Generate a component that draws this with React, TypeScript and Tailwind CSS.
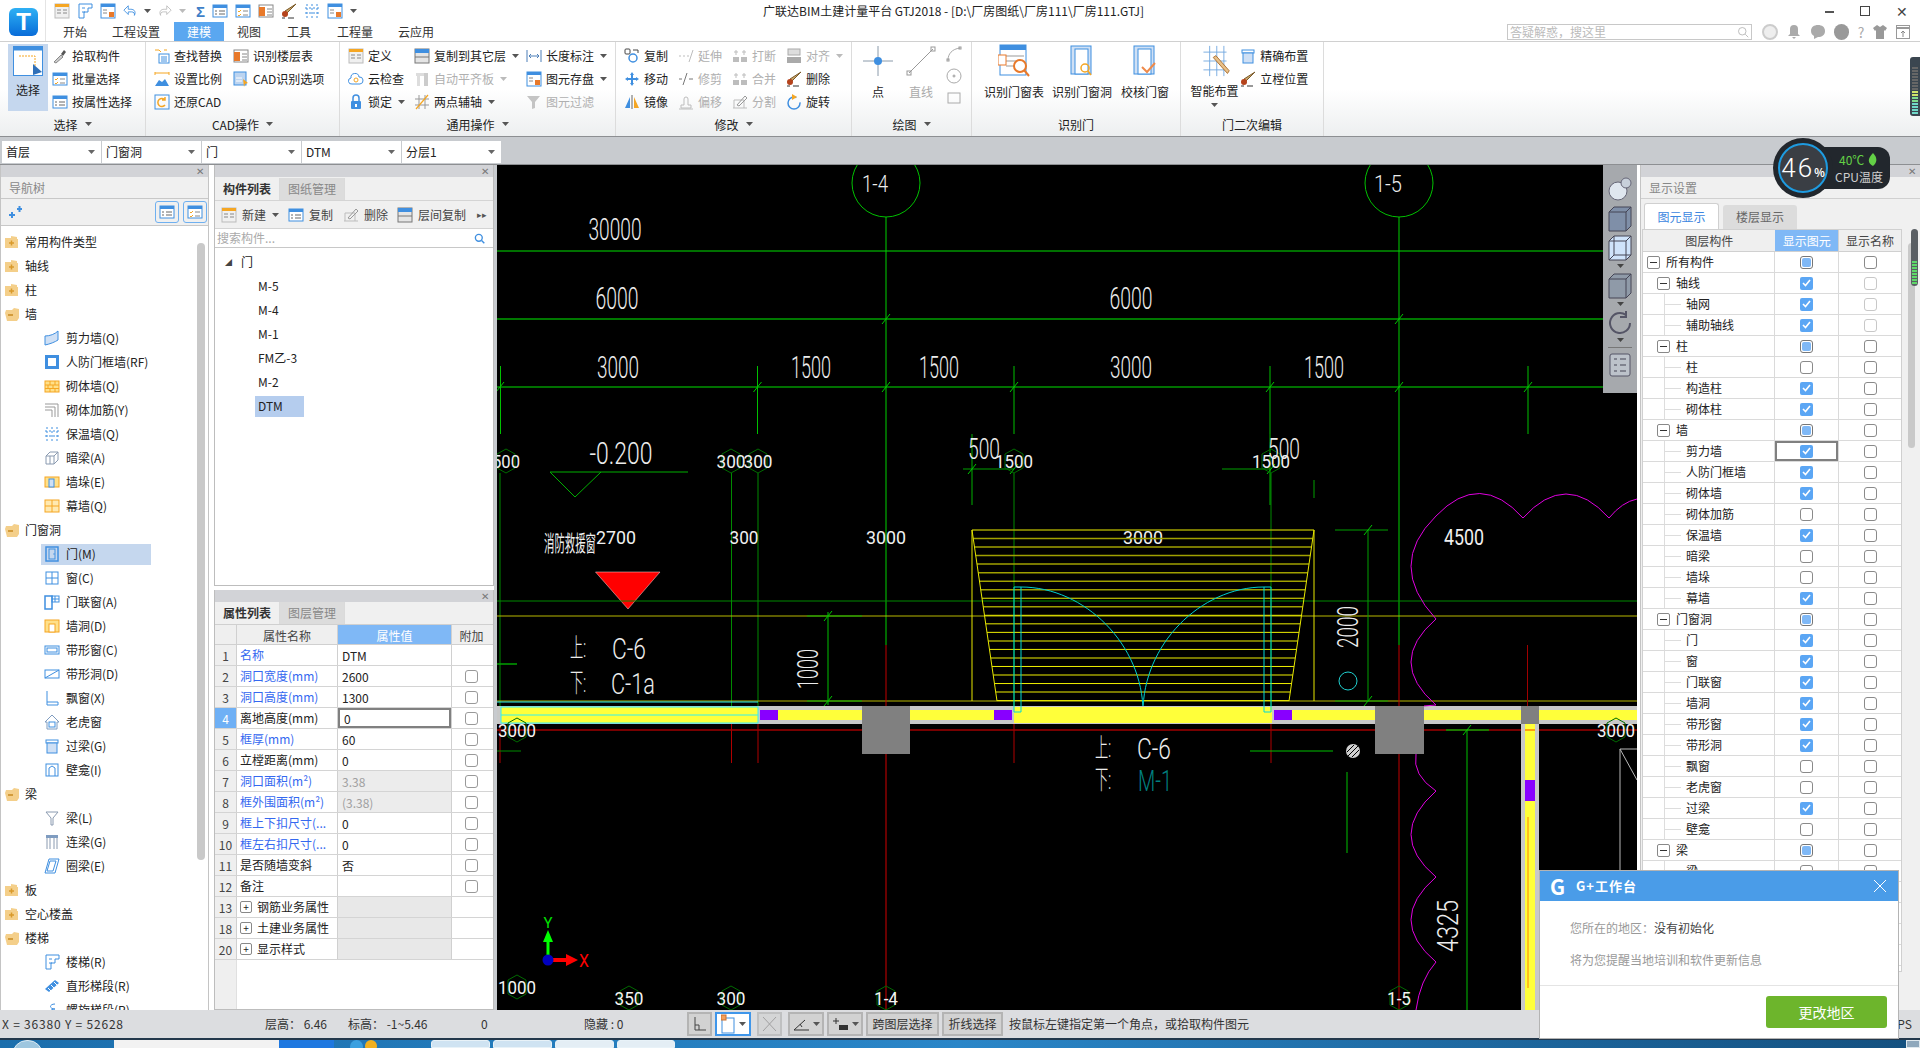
import React from "react";

const B = "#3f8fe0";
const O = "#f5a623";
const G = "#bdbdbd";
const D = "#666";

const Caret = ({ c = "#555" }: { c?: string }) => (
  <svg width="7" height="4" className="shrink-0"><path d="M0 0h7L3.5 4z" fill={c} /></svg>
);

// small 16x16 icon drawings
const ICONS: Record<string, React.ReactNode> = {
  pick: <><path d="M2 14l7-7 2 2-7 6z" fill="#ccc" stroke="#888" /><path d="M9 6l3-4 2 2-3 4z" fill="#555" /></>,
  batch: <><rect x="1" y="2" width="14" height="12" stroke={B} fill="#fff" /><rect x="1" y="2" width="14" height="3" fill={B} /><path d="M3 8l1 1 2-2M3 12l1 1 2-2" stroke={O} /><path d="M8 8h5M8 12h5" stroke="#888" /></>,
  prop: <><rect x="1" y="2" width="14" height="12" stroke={B} fill="#fff" /><rect x="1" y="2" width="14" height="3" fill={B} /><path d="M3 8h2M3 11h2M7 8h6M7 11h6" stroke={D} /></>,
  find: <><rect x="5" y="6" width="10" height="9" stroke={B} fill="#fff" /><path d="M7 9h6M7 11h6M7 13h6" stroke={B} /><path d="M1 2h4l2 2M10 2h3" stroke={O} /></>,
  scale: <><path d="M1 15l4-6 3 2 3-3 4 7z" fill={B} /><path d="M1 2h14M1 1v3M15 1v3" stroke={O} /></>,
  restore: <><rect x="1" y="1" width="14" height="14" stroke={B} /><path d="M11 6a4 4 0 1 0 0 5M11 3v3H8" stroke={O} strokeWidth="1.5" /></>,
  floor: <><rect x="1" y="2" width="14" height="12" stroke="#888" fill="#fff" /><rect x="1" y="4" width="6" height="9" fill="#e8792a" /><path d="M9 6h5M9 9h5M9 12h5" stroke="#888" /></>,
  cadopt: <><rect x="1" y="1" width="12" height="13" fill="#bcd4f0" stroke={B} /><path d="M10 8l5 4-3 1-1 3z" fill={O} /><path d="M3 7h6M3 10h6" stroke="#fff" /></>,
  define: <><rect x="1" y="1" width="14" height="14" fill="#f0f0f0" stroke="#bbb" /><rect x="1" y="1" width="14" height="3" fill={O} /><path d="M3 7h4M3 10h4M9 7h4M9 10h4" stroke="#888" /></>,
  cloud: <><path d="M4 13a3 3 0 0 1-1-6 4 4 0 0 1 8-1 3.500 3.500 0 0 1 1 7z" fill="#fff" stroke={B} /><circle cx="8" cy="9" r="2" stroke={O} /></>,
  lock: <><rect x="3" y="7" width="10" height="8" rx="1" fill={B} /><path d="M5 7V4a3 3 0 0 1 6 0v3" stroke={B} strokeWidth="1.500" /><rect x="7" y="10" width="2" height="3" fill="#fff" /></>,
  copyfl: <><rect x="1" y="1" width="14" height="14" fill="#e5e5e5" stroke="#777" /><rect x="1" y="1" width="14" height="4" fill={B} /><path d="M1 9h14" stroke="#777" /></>,
  autoalign: <><rect x="2" y="2" width="12" height="3" fill="#ddd" /><rect x="3" y="2" width="3" height="13" fill="#ddd" /><rect x="10" y="2" width="4" height="13" fill="#ccc" /></>,
  twoaxis: <><path d="M1 5h14M1 11h14M5 1v14M11 1v14" stroke="#999" /><path d="M2 15L14 1" stroke={O} strokeWidth="1.200" /></>,
  length: <><path d="M1 2v12M15 2v12M3 8h10M3 8l2-2M3 8l2 2M13 8l-2-2M13 8l-2 2" stroke="#4d7fb8" /></>,
  savefile: <><rect x="1" y="1" width="14" height="14" fill="#fff" stroke={B} /><rect x="1" y="1" width="14" height="3" fill={B} /><path d="M3 7h4M3 10h4" stroke="#888" /><rect x="9" y="9" width="5" height="5" fill="#e8792a" /></>,
  filter: <path d="M1 2h13L9 8v6l-3 1V8z" fill="#c4c4c4" />,
  copy: <><rect x="1" y="1" width="5" height="5" rx="1" stroke="#444" /><circle cx="9" cy="10" r="4" stroke={B} strokeWidth="1.500" /><path d="M9 2h5v3" stroke="#444" /></>,
  move: <path d="M8 1l2 3H9v3h3V6l3 2-3 2V9H9v3h1l-2 3-2-3h1V9H4v1L1 8l3-2v1h3V4H6z" fill={B} />,
  mirror: <><path d="M1 14l5-11v11z" fill={B} /><path d="M15 14L10 3v11z" fill={O} /><path d="M8 1v14" stroke={D} /></>,
  extend: <path d="M1 8h2M5 8h2M9 8h2M11 14l4-12" stroke={G} />,
  trim: <path d="M1 8h3M11 8h4M5 14L9 2" stroke="#777" />,
  offset: <path d="M3 14v-3h3V5a2 2 0 0 1 4 0v6h3v3zM1 15h14" stroke={G} />,
  brk: <><rect x="1" y="9" width="6" height="5" fill={G} /><rect x="9" y="9" width="6" height="5" fill={G} /><path d="M4 2v5M2 4h4M12 2v5M10 4h4" stroke={G} /></>,
  split: <><path d="M1 14h14M2 6h10M2 6v8M12 6v8" stroke={G} /><path d="M5 11l8-9 2 2-8 8z" stroke="#999" /></>,
  align: <><rect x="2" y="1" width="12" height="6" fill="#ddd" stroke="#aaa" /><rect x="1" y="9" width="14" height="6" fill="#aaa" /></>,
  del: <><path d="M15 1L6 10l-2-2z" fill="#c9a56a" stroke="#7a5a2a" /><circle cx="4" cy="11" r="3" fill="#b5431c" /><path d="M1 15h3M7 15h6" stroke="#333" /></>,
  rotate: <><circle cx="8" cy="9" r="6" stroke={B} strokeWidth="1.500" strokeDasharray="30 6" /><path d="M6 0l5 3-5 3z" fill={O} /></>,
  folderPlus: <><path d="M1 4h6V2l6 1v2h1v9H1z" fill="#f4cf8a" /><path d="M5 9h5M7.500 6.500v5" stroke="#d99a2b" strokeWidth="1.500" /></>,
  folderMinus: <><path d="M2 4h6l2-2 5 1v9l-2 3H3l-2-8z" fill="#f4cf8a" /><path d="M4 9h5" stroke="#c98a1f" strokeWidth="1.500" /></>,
  shear: <><path d="M1 6c5 0 10-2 13-5v9c-3 2-8 4-13 5z" fill="#cfe0f5" stroke={B} /></>,
  rf: <><rect x="1" y="1" width="14" height="14" fill={B} /><rect x="4" y="4" width="8" height="8" fill="#fff" /></>,
  masonry: <><rect x="1" y="3" width="14" height="11" fill="#ffe08a" stroke={O} /><path d="M1 7h14M1 10.500h14M6 3v4M11 3v4M4 7v3.500M9 7v3.500M6 10.500V14M11 10.500V14" stroke={O} /></>,
  rebar: <path d="M1 2h13v13M1 5h10v10M1 8h7v7" stroke="#999" />,
  insul: <path d="M3 1v14M8 1v14M13 1v14M1 5h14M1 10h14" stroke={B} strokeDasharray="2 2" />,
  hidden: <><path d="M2 6l4-4h8v8l-4 4H2z" stroke="#8a9ab0" fill="#fff" /><path d="M2 6h8v8M10 6l4-4M6 6v8" stroke="#8a9ab0" /></>,
  pier: <><rect x="1" y="3" width="14" height="10" fill="#ffe08a" stroke={O} /><rect x="5" y="5" width="5" height="8" fill="#cfe0f5" stroke={B} /></>,
  curtain: <><rect x="1" y="2" width="14" height="12" fill="#ffe9b0" stroke={O} /><path d="M8 2v12M1 8h14" stroke={O} /></>,
  door: <><rect x="2" y="1" width="12" height="14" stroke={B} strokeWidth="1.500" /><rect x="5" y="3" width="6" height="10" stroke={B} /><circle cx="10" cy="8" r=".7" fill={B} /></>,
  win: <><rect x="2" y="2" width="12" height="12" stroke={B} /><path d="M8 2v12M2 8h12" stroke={B} /></>,
  doorwin: <><rect x="1" y="2" width="7" height="13" stroke={B} strokeWidth="1.500" /><rect x="8" y="2" width="7" height="6" stroke={B} /><path d="M11 2v6M8 5h7" stroke={B} /></>,
  hole: <><rect x="1" y="2" width="14" height="12" fill="#ffe08a" stroke={O} /><rect x="5" y="6" width="6" height="8" fill="#fff" stroke={O} /></>,
  stripw: <><rect x="1" y="4" width="14" height="8" stroke={B} /><rect x="3" y="6" width="10" height="4" stroke={B} /></>,
  striph: <><rect x="1" y="4" width="14" height="8" stroke={B} /><path d="M1 12L15 4" stroke={B} /></>,
  bay: <path d="M3 1v11h11M3 15h11v-3M3 12v3" stroke={B} />,
  dormer: <><path d="M8 1L1 8h2v7h10V8h2z" stroke="#7f9cc0" fill="#fff" /><rect x="5" y="8" width="6" height="5" stroke={B} /></>,
  lintel: <><rect x="2" y="2" width="12" height="3" stroke={B} /><rect x="3" y="5" width="10" height="10" fill="#cfe0f5" stroke={B} /></>,
  niche: <><rect x="2" y="2" width="12" height="12" stroke={B} /><path d="M5 14V6l3-2 3 2v8" stroke={B} /></>,
  beam: <path d="M2 2h12L9 8v7H7V8z" stroke="#8a9ab0" />,
  linkb: <><rect x="2" y="1" width="12" height="3" fill="#7f9cc0" /><path d="M3 4v11M13 4v11M6 4v11M10 4v11" stroke="#8a9ab0" /></>,
  ring: <path d="M5 1h10l-4 14H1z M6 3l-3 10h6l3-10z" stroke={B} />,
  stair: <path d="M2 1h13v4h-4v4H7v6H2z M5 5h3M5 9h3" stroke={B} fill="#fff" />,
  flight: <><path d="M1 11L11 2l4 3-10 9z" fill={B} /><path d="M4 10l3 3M7 7l3 3M10 4l3 3" stroke="#fff" /></>,
  spiral: <path d="M11 2c-6 0-6 5 0 5M11 7c-6 0-6 5 0 5" stroke={B} />,
};

const Ico = ({ n, s = 16 }: { n: string; s?: number }) => (
  <svg width={s} height={s} viewBox="0 0 16 16" fill="none" className="shrink-0">{ICONS[n]}</svg>
);

const Item = ({ n, t, gray, arrow }: { n: string; t: string; gray?: boolean; arrow?: boolean }) => (
  <div className={`flex items-center h-[23px] whitespace-nowrap ${gray ? "text-[#b0b0b0]" : "text-[#222]"}`}>
    <span className="w-[20px] shrink-0"><Ico n={n} /></span>
    <span>{t}</span>
    {arrow && <span className="ml-[6px]"><Caret c={gray ? "#bbb" : "#555"} /></span>}
  </div>
);

const Col = ({ w, children }: { w: string; children: React.ReactNode }) => (
  <div className={`flex flex-col ${w}`}>{children}</div>
);

const Group = ({ w, label, arrow, pl, children }: { w: string; label: string; arrow?: boolean; pl: string; children: React.ReactNode }) => (
  <div className={`flex flex-col h-full border-r border-[#dcdcdc] shrink-0 overflow-hidden ${w}`}>
    <div className={`flex h-[70px] shrink-0 pt-[2px] ${pl}`}>{children}</div>
    <div className="h-[24px] flex items-center justify-center gap-[7px] text-[#222]">
      {label}{arrow && <Caret />}
    </div>
  </div>
);

const BigBtn = ({ t, w, gray, children }: { t: string; w: string; gray?: boolean; children: React.ReactNode }) => (
  <div className={`flex flex-col items-center ${w} ${gray ? "text-[#aaa]" : "text-[#222]"}`}>
    <div className="h-[34px] flex items-center">{children}</div>
    <div className="mt-[2px] whitespace-nowrap">{t}</div>
  </div>
);

const TopBar = () => (
  <div className="flex h-[41px] bg-white shrink-0">
    <div className="w-[46px] shrink-0 flex items-start pt-[8px] pl-[9px] border-r border-[#e4e4e4]">
      <div className="w-[29px] h-[28px] rounded-[6px] bg-gradient-to-b from-[#2fb0f4] to-[#0a6cd8] text-white text-[24px] font-bold leading-[28px] text-center font-['Liberation_Sans',sans-serif]">T</div>
    </div>
    <div className="flex-1 flex flex-col">
      <div className="h-[22px] flex items-center">
        <div className="w-[717px] flex items-center">
          <div className="flex items-center gap-[7px] pl-[8px]">
            {["define", "stair", "savefile"].map((n) => <Ico key={n} n={n} />)}
            <svg width="14" height="14" viewBox="0 0 16 16" fill="none"><path d="M6 2L1 7l5 5V9h4a3 3 0 0 1 3 4c2-4 0-7-4-7H6z" stroke={B} /></svg>
            <Caret />
            <svg width="14" height="14" viewBox="0 0 16 16" fill="none"><path d="M10 2l5 5-5 5V9H6a3 3 0 0 0-3 4C1 9 3 6 7 6h3z" stroke={G} /></svg>
            <Caret c="#bbb" />
            <span className="ml-[3px] text-[#3f7fc8] text-[15px] leading-none font-bold font-['Liberation_Sans',sans-serif]">Σ</span>
            <Ico n="prop" />
            <Ico n="batch" />
            <Ico n="floor" />
            <Ico n="del" />
            <Ico n="insul" />
            <Ico n="savefile" />
            <Caret />
          </div>
        </div>
        <div className="w-[393px] text-[12px] text-[#222] whitespace-nowrap">广联达BIM土建计量平台 GTJ2018 - [D:\厂房图纸\厂房111\厂房111.GTJ]</div>
        <div className="flex-1 flex items-center justify-end gap-[26px] pr-[12px]">
          <span className="w-[9px] h-[2px] bg-[#555] mt-[2px]" />
          <span className="w-[10px] h-[10px] border border-[#444] bg-white" />
          <span className="text-[#444] text-[14px] leading-none">✕</span>
        </div>
      </div>
      <div className="flex items-stretch h-[19px] text-[12px] text-[#333] leading-[19px] pl-[6px]">
        <div className="w-[46px] text-center">开始</div>
        <div className="w-[76px] text-center">工程设置</div>
        <div className="w-[50px] text-center bg-[#5aa7f0] text-white">建模</div>
        <div className="w-[50px] text-center">视图</div>
        <div className="w-[50px] text-center">工具</div>
        <div className="w-[62px] text-center">工程量</div>
        <div className="w-[60px] text-center">云应用</div>
        <div className="ml-auto flex items-center">
          <div className="w-[245px] h-[16px] border border-[#c8c8c8] flex items-center justify-between px-[2px] text-[#bbb] leading-none">
            <span>答疑解惑，搜这里</span>
            <svg width="12" height="12" viewBox="0 0 16 16" fill="none"><circle cx="7" cy="7" r="5" stroke="#aaa" /><path d="M11 11l4 4" stroke="#aaa" /></svg>
          </div>
          <div className="w-[168px] flex items-center justify-around px-[6px]">
            <span className="w-[16px] h-[16px] rounded-full border-2 border-[#ccc] bg-[#eee]" />
            <svg width="14" height="16" viewBox="0 0 14 16"><path d="M7 1a4 4 0 0 0-4 4v5l-2 2h12l-2-2V5a4 4 0 0 0-4-4zM5 13h4l-2 2z" fill="#aaa" /></svg>
            <svg width="16" height="14" viewBox="0 0 16 14"><path d="M8 0c4 0 7 2 7 6s-3 6-7 6l-4 2v-3C2 10 1 8 1 6c0-4 3-6 7-6z" fill="#aaa" /></svg>
            <span className="w-[15px] h-[16px] rounded-full bg-[#999]" />
            <span className="text-[#aaa] text-[14px] leading-none">?</span>
            <svg width="14" height="14" viewBox="0 0 14 14"><path d="M4 0L0 3l2 3 1-1v9h8V5l1 1 2-3-4-3-3 2z" fill="#999" /></svg>
            <svg width="14" height="14" viewBox="0 0 14 14" fill="none"><rect x=".5" y=".5" width="13" height="13" stroke="#999" /><path d="M1 3h12" stroke="#999" strokeWidth="2" /><path d="M7 12V6M5 8l2-2 2 2" stroke="#888" /></svg>
          </div>
        </div>
      </div>
    </div>
  </div>
);

const Ribbon = () => (
  <div className="relative flex h-[96px] shrink-0 border-t border-b border-[#d0d0d0] border-b-[#8d8f92] bg-gradient-to-b from-white via-white to-[#edeff0] text-[12px] leading-[23px]">
    <Group w="w-[146px]" label="选择" arrow pl="pl-[8px]">
      <div className="w-[40px] h-[67px] bg-[#c5d7ee] flex flex-col items-center pt-[2px] mr-[4px] text-[#222]">
        <svg width="30" height="30" viewBox="0 0 30 30" fill="none"><rect x=".5" y=".5" width="29" height="29" fill="#fff" stroke={B} /><rect x=".5" y=".5" width="29" height="4" fill={B} /><path d="M6 10h16v14" stroke={O} strokeDasharray="2 1" /><path d="M20 18l9 8-9 3z" fill="#2f6fb8" /></svg>
        <span className="mt-[2px]">选择</span>
      </div>
      <Col w="w-[92px]">
        <Item n="pick" t="拾取构件" />
        <Item n="batch" t="批量选择" />
        <Item n="prop" t="按属性选择" />
      </Col>
    </Group>
    <Group w="w-[194px]" label="CAD操作" arrow pl="pl-[8px]">
      <Col w="w-[79px]">
        <Item n="find" t="查找替换" />
        <Item n="scale" t="设置比例" />
        <Item n="restore" t="还原CAD" />
      </Col>
      <Col w="w-[100px]">
        <Item n="floor" t="识别楼层表" />
        <Item n="cadopt" t="CAD识别选项" />
      </Col>
    </Group>
    <Group w="w-[276px]" label="通用操作" arrow pl="pl-[8px]">
      <Col w="w-[66px]">
        <Item n="define" t="定义" />
        <Item n="cloud" t="云检查" />
        <Item n="lock" t="锁定" arrow />
      </Col>
      <Col w="w-[112px]">
        <Item n="copyfl" t="复制到其它层" arrow />
        <Item n="autoalign" t="自动平齐板" gray arrow />
        <Item n="twoaxis" t="两点辅轴" arrow />
      </Col>
      <Col w="w-[86px]">
        <Item n="length" t="长度标注" arrow />
        <Item n="savefile" t="图元存盘" arrow />
        <Item n="filter" t="图元过滤" gray />
      </Col>
    </Group>
    <Group w="w-[236px]" label="修改" arrow pl="pl-[8px]">
      <Col w="w-[54px]">
        <Item n="copy" t="复制" />
        <Item n="move" t="移动" />
        <Item n="mirror" t="镜像" />
      </Col>
      <Col w="w-[54px]">
        <Item n="extend" t="延伸" gray />
        <Item n="trim" t="修剪" gray />
        <Item n="offset" t="偏移" gray />
      </Col>
      <Col w="w-[54px]">
        <Item n="brk" t="打断" gray />
        <Item n="brk" t="合并" gray />
        <Item n="split" t="分割" gray />
      </Col>
      <Col w="w-[60px]">
        <Item n="align" t="对齐" gray arrow />
        <Item n="del" t="删除" />
        <Item n="rotate" t="旋转" />
      </Col>
    </Group>
    <Group w="w-[120px]" label="绘图" arrow pl="pl-[8px]">
      <BigBtn t="点" w="w-[36px]">
        <svg width="30" height="30" viewBox="0 0 30 30" fill="none"><path d="M15 0v30M0 15h30" stroke="#8a9aaa" /><circle cx="15" cy="15" r="4" fill={B} /></svg>
      </BigBtn>
      <BigBtn t="直线" w="w-[50px]" gray>
        <svg width="30" height="30" viewBox="0 0 30 30" fill="none"><path d="M3 27L27 3" stroke="#999" /><rect x="1" y="25" width="4" height="4" stroke="#999" /><rect x="25" y="1" width="4" height="4" stroke="#999" /></svg>
      </BigBtn>
      <div className="flex flex-col items-center gap-[6px] w-[16px] pt-[2px]">
        <svg width="16" height="16" viewBox="0 0 16 16" fill="none"><path d="M2 14C2 8 6 3 14 2" stroke="#aaa" /><rect x="1" y="13" width="2" height="2" stroke="#999" /><rect x="13" y="1" width="2" height="2" stroke="#999" /></svg>
        <svg width="16" height="16" viewBox="0 0 16 16" fill="none"><circle cx="8" cy="8" r="7" stroke="#aaa" /><circle cx="8" cy="8" r="1" stroke="#999" /></svg>
        <svg width="16" height="16" viewBox="0 0 16 16" fill="none"><rect x="2" y="3" width="12" height="10" stroke="#aaa" /></svg>
      </div>
    </Group>
    <Group w="w-[209px]" label="识别门" pl="pl-[8px]">
      <BigBtn t="识别门窗表" w="w-[68px]">
        <svg width="32" height="34" viewBox="0 0 32 34" fill="none"><rect x="2" y="1" width="26" height="30" fill="#fff" stroke={B} /><rect x="2" y="1" width="26" height="5" fill={B} /><path d="M8 12h18M8 17h10M8 22h8" stroke="#999" /><rect x="0" y="11" width="8" height="10" fill="#fff" stroke="#e8792a" /><circle cx="22" cy="22" r="6" fill="#fff" stroke="#e8792a" strokeWidth="2" /><path d="M26 26l5 6" stroke="#e8792a" strokeWidth="2" /></svg>
      </BigBtn>
      <BigBtn t="识别门窗洞" w="w-[68px]">
        <svg width="24" height="32" viewBox="0 0 24 32" fill="none"><rect x="1" y="1" width="20" height="28" fill="#cfe0f5" stroke={B} /><rect x="5" y="4" width="13" height="25" fill="#fff" stroke={B} /><circle cx="15" cy="23" r="4" stroke={O} strokeWidth="1.500" /><path d="M18 26l3 4" stroke={O} strokeWidth="1.500" /></svg>
      </BigBtn>
      <BigBtn t="校核门窗" w="w-[58px]">
        <svg width="24" height="32" viewBox="0 0 24 32" fill="none"><rect x="1" y="1" width="20" height="28" fill="#cfe0f5" stroke={B} /><rect x="5" y="4" width="13" height="25" fill="#fff" stroke={B} /><path d="M9 22l5 5 8-9" stroke="#ef8a4a" strokeWidth="2" /></svg>
      </BigBtn>
    </Group>
    <Group w="w-[143px]" label="门二次编辑" pl="pl-[8px]">
      <div className="flex flex-col items-center w-[52px] text-[#222]">
        <svg width="30" height="32" viewBox="0 0 32 36" fill="none" className="mt-[1px]"><path d="M3 8h26M3 18h26M3 28h26M10 1v34M18 1v34M26 1v34" stroke="#6fa6de" /><path d="M30 32L14 14l3-2 15 17z" fill="#e8c088" stroke="#a86a2a" /></svg>
        <span className="mt-[2px]">智能布置</span>
        <span className="mt-[1px] leading-none"><Caret /></span>
      </div>
      <Col w="w-[84px]">
        <Item n="lintel" t="精确布置" />
        <Item n="del" t="立樘位置" />
      </Col>
    </Group>
    <div className="flex-1" />
    <div className="absolute right-0 top-[15px] w-[10px] h-[59px] rounded-l-[3px] bg-[#3b4650] flex flex-col justify-end gap-[1px] p-[2px]">
      {["#666", "#666", "#666", "#666", "#666", "#666", "#666", "#666", "#cfe26a", "#cfe26a", "#7fdc8f", "#7fdc8f", "#6fd8c8", "#6fd8c8", "#6fd8c8", "#6fd8c8"].map((c, i) => (
        <span key={i} className="h-[2px] w-full" style={{ background: c }} />
      ))}
    </div>
  </div>
);

const Selector = () => (
  <div className="flex gap-[1px] pl-[2px] pt-[4px] h-[28px] bg-[#c8cbcf] shrink-0 text-[12px] border-b border-[#8d8f92]">
    {["首层", "门窗洞", "门", "DTM", "分层1"].map((t) => (
      <div key={t} className="w-[99px] h-[22px] bg-white flex items-center justify-between pl-[4px] pr-[6px] text-[#222]">
        <span>{t}</span><Caret c="#666" />
      </div>
    ))}
  </div>
);

const CloseBar = () => (
  <div className="h-[12px] bg-[#d2d3d7] flex items-center justify-end pr-[4px] text-[#777] text-[10px] leading-none shrink-0">✕</div>
);

const NAV: [string, string][] = [
  ["常用构件类型", "+"], ["轴线", "+"], ["柱", "+"], ["墙", "-"],
  ["剪力墙(Q)", "shear"], ["人防门框墙(RF)", "rf"], ["砌体墙(Q)", "masonry"], ["砌体加筋(Y)", "rebar"],
  ["保温墙(Q)", "insul"], ["暗梁(A)", "hidden"], ["墙垛(E)", "pier"], ["幕墙(Q)", "curtain"],
  ["门窗洞", "-"], ["门(M)", "door"], ["窗(C)", "win"], ["门联窗(A)", "doorwin"], ["墙洞(D)", "hole"],
  ["带形窗(C)", "stripw"], ["带形洞(D)", "striph"], ["飘窗(X)", "bay"], ["老虎窗", "dormer"],
  ["过梁(G)", "lintel"], ["壁龛(I)", "niche"], ["梁", "-"], ["梁(L)", "beam"], ["连梁(G)", "linkb"],
  ["圈梁(E)", "ring"], ["板", "+"], ["空心楼盖", "+"], ["楼梯", "-"], ["楼梯(R)", "stair"],
  ["直形梯段(R)", "flight"], ["螺旋梯段(R)", "spiral"],
];

const NavPanel = () => (
  <div className="w-[209px] shrink-0 flex flex-col border-x border-[#c4c4c4] bg-white text-[12px] text-[#222]">
    <CloseBar />
    <div className="h-[22px] bg-[#f0f0f0] flex items-center pl-[8px] text-[#888] border-b border-[#c8c8c8] shrink-0">导航树</div>
    <div className="h-[27px] bg-[#f0f0f0] flex items-center justify-between pl-[7px] pr-[1px] border-b border-[#c8c8c8] shrink-0">
      <svg width="14" height="12" viewBox="0 0 14 12"><path d="M1 9h6M4 6v6M9 3h5M11.500 0v6" stroke={B} strokeWidth="2" /></svg>
      <div className="flex gap-[4px]">
        <span className="w-[24px] h-[22px] rounded-[3px] border border-[#6fb0f0] flex items-center justify-center"><Ico n="prop" /></span>
        <span className="w-[24px] h-[22px] rounded-[3px] border border-[#6fb0f0] flex items-center justify-center"><Ico n="batch" /></span>
      </div>
    </div>
    <div className="flex flex-1 overflow-hidden">
      <div className="flex-1 overflow-hidden pt-[4px]">
        {NAV.map(([t, k]) =>
          k === "+" || k === "-" ? (
            <div key={t} className="h-[24px] flex items-center pl-[3px] gap-[5px] whitespace-nowrap">
              <Ico n={k === "+" ? "folderPlus" : "folderMinus"} /><span>{t}</span>
            </div>
          ) : (
            <div key={t} className="h-[24px] flex items-center pl-[40px] whitespace-nowrap">
              <div className={`w-[110px] h-[21px] flex items-center pl-[3px] gap-[6px] ${t === "门(M)" ? "bg-[#c5d7ee]" : ""}`}>
                <Ico n={k} /><span>{t}</span>
              </div>
            </div>
          ),
        )}
      </div>
      <div className="w-[8px] mt-[17px] mb-[150px] mr-[3px] rounded-full bg-[#c9c9c9] shrink-0" />
    </div>
  </div>
);

const Tab = ({ t, on }: { t: string; on?: boolean }) => (
  <div className={`w-[65px] h-[22px] flex items-center justify-center border-r border-[#dadada] ${on ? "bg-[#f0f0f0] text-[#333] font-bold" : "bg-[#dcdcdc] text-[#888]"}`}>{t}</div>
);

const ComponentPanel = () => (
  <div className="h-[421px] flex flex-col border border-[#bdbdbd] border-t-0 bg-white text-[12px] shrink-0">
    <CloseBar />
    <div className="flex bg-[#f0f0f0] shrink-0 h-[23px] pt-[1px]"><Tab t="构件列表" on /><Tab t="图纸管理" /></div>
    <div className="h-[29px] flex items-center bg-[#f0f0f0] border-y border-[#d4d4d4] pl-[6px] text-[#444] shrink-0">
      <span className="mr-[5px]"><Ico n="define" /></span>新建<span className="ml-[6px] mr-[9px]"><Caret /></span>
      <span className="mr-[5px]"><Ico n="prop" /></span>复制
      <span className="ml-[10px] mr-[5px]"><Ico n="split" /></span>删除
      <span className="ml-[9px] mr-[5px]"><Ico n="copyfl" /></span>层间复制
      <span className="ml-auto mr-[6px] text-[9px] text-[#555]">▸▸</span>
    </div>
    <div className="h-[19px] flex items-center justify-between px-[2px] pr-[8px] text-[#aaa] border-b border-[#c8c8c8] shrink-0">
      <span>搜索构件...</span>
      <svg width="11" height="11" viewBox="0 0 16 16" fill="none"><circle cx="7" cy="7" r="5" stroke={B} strokeWidth="2" /><path d="M11 11l4 4" stroke={B} strokeWidth="2" /></svg>
    </div>
    <div className="pt-[2px] text-[#222]">
      <div className="h-[24px] flex items-center pl-[10px] gap-[9px]"><span className="text-[7px] text-[#444]">◢</span>门</div>
      {["M-5", "M-4", "M-1", "FM乙-3", "M-2", "DTM"].map((t) => (
        <div key={t} className="h-[24px] flex items-center pl-[40px]">
          <span className={`w-[49px] h-[21px] flex items-center pl-[3px] ${t === "DTM" ? "bg-[#b5cdee]" : ""}`}>{t}</span>
        </div>
      ))}
    </div>
  </div>
);

const PROPS: { n: string; l: string; v?: string; blue?: boolean; ro?: boolean; cb?: boolean; sel?: boolean; grp?: boolean }[] = [
  { n: "1", l: "名称", v: "DTM", blue: true },
  { n: "2", l: "洞口宽度(mm)", v: "2600", blue: true, cb: true },
  { n: "3", l: "洞口高度(mm)", v: "1300", blue: true, cb: true },
  { n: "4", l: "离地高度(mm)", v: "0", cb: true, sel: true },
  { n: "5", l: "框厚(mm)", v: "60", blue: true, cb: true },
  { n: "6", l: "立樘距离(mm)", v: "0", cb: true },
  { n: "7", l: "洞口面积(m²)", v: "3.38", blue: true, ro: true, cb: true },
  { n: "8", l: "框外围面积(m²)", v: "(3.38)", blue: true, ro: true, cb: true },
  { n: "9", l: "框上下扣尺寸(...", v: "0", blue: true, cb: true },
  { n: "10", l: "框左右扣尺寸(...", v: "0", blue: true, cb: true },
  { n: "11", l: "是否随墙变斜", v: "否", cb: true },
  { n: "12", l: "备注", v: "", cb: true },
  { n: "13", l: "钢筋业务属性", grp: true },
  { n: "18", l: "土建业务属性", grp: true },
  { n: "20", l: "显示样式", grp: true },
];

const Box = ({ cls = "" }: { cls?: string }) => (
  <span className={`w-[13px] h-[13px] rounded-[3px] border border-[#8a8a8a] bg-white block ${cls}`} />
);

const PropsPanel = () => (
  <div className="flex-1 flex flex-col border border-[#bdbdbd] border-t-0 bg-white text-[12px] overflow-hidden">
    <CloseBar />
    <div className="flex bg-[#f0f0f0] shrink-0 h-[22px]"><Tab t="属性列表" on /><Tab t="图层管理" /></div>
    <div className="flex h-[21px] text-center leading-[21px] bg-[#efefef] border-y border-[#d0d0d0] shrink-0">
      <div className="w-[22px] border-r border-[#d0d0d0]" />
      <div className="w-[101px] border-r border-[#d0d0d0] text-[#444]">属性名称</div>
      <div className="w-[113px] bg-[#7fb8f6] text-white">属性值</div>
      <div className="w-[40px] border-l border-[#d0d0d0] text-[#444]">附加</div>
    </div>
    {PROPS.map((p) => (
      <div key={p.n} className="flex h-[21px] leading-[22px] border-b border-[#d4d4d4] shrink-0">
        <div className={`w-[22px] text-center border-r border-[#d0d0d0] ${p.sel ? "bg-[#6fb0f5] text-white" : "bg-[#efefef] text-[#444]"}`}>{p.n}</div>
        <div className={`w-[101px] flex items-center pl-[3px] gap-[5px] border-r border-[#d0d0d0] whitespace-nowrap overflow-hidden ${p.blue ? "text-[#3468f0]" : "text-[#222]"}`}>
          {p.grp && <span className="w-[12px] h-[12px] rounded-[2px] border border-[#888] flex items-center justify-center text-[10px] leading-none shrink-0">+</span>}
          {p.l}
        </div>
        <div className={`w-[113px] pl-[4px] ${p.sel ? "border-2 border-[#808080] leading-[17px]" : ""} ${p.ro ? "bg-[#ececec] text-[#a0a0a0]" : "text-[#222]"} ${p.grp ? "bg-[#e8e8e8]" : ""}`}>{p.v}</div>
        <div className="w-[40px] border-l border-[#d0d0d0] flex items-center justify-center">{p.cb && <Box cls="border-[#999]" />}</div>
      </div>
    ))}
    <div className="flex-1 w-[22px] bg-[#efefef] border-r border-[#e0e0e0]" />
  </div>
);

// digits of the drawing, stretched to the width they have on the plan
const T = ({ x, y, s, w, t, c = "#ececec", rot }: { x: number; y: number; s: number; w: number; t: string; c?: string; rot?: number }) => (
  <text x={x} y={y} fontSize={s} fill={c} textAnchor="middle" dominantBaseline="central" textLength={w} lengthAdjust="spacingAndGlyphs"
    fontWeight={s >= 24 ? 300 : 400}
    fontFamily="Roboto,'Noto Sans CJK SC',sans-serif" transform={rot ? `rotate(${rot} ${x} ${y})` : undefined}>{t}</text>
);

const Hex = ({ x, y }: { x: number; y: number }) => (
  <path d={`M${x} ${y - 12}l9 5v14l-9 5-9-5v-14z`} stroke="#006a00" fill="none" />
);

const Tick = ({ x, y, c = "#00c800" }: { x: number; y: number; c?: string }) => (
  <path d={`M${x - 4} ${y + 5}L${x + 4} ${y - 5}`} stroke={c} />
);

const hatch = Array.from({ length: 21 }, (_, i) => 530 + i * 8.53);
const wallBand = "#c8c8c8";

const CadDrawing = () => (
  <svg width="1140" height="845" viewBox="497 165 1140 845" className="block" shapeRendering="geometricPrecision">
    {/* axis circles */}
    <circle cx="886" cy="183" r="34" stroke="#00c000" fill="none" />
    <circle cx="1399" cy="183" r="34" stroke="#00c000" fill="none" />
    <T x={875} y={184} s={24} w={26} t="1-4" />
    <T x={1388} y={184} s={24} w={28} t="1-5" />
    {/* dimension lines */}
    <path d="M497 251H1637" stroke="#00e000" />
    <path d="M497 319H1637" stroke="#00a000" strokeWidth="1.500" />
    <path d="M497 387H1637" stroke="#00e000" />
    <path d="M886 217V645M1399 217V645" stroke="#00d000" />
    <path d="M500.500 366V434M757.500 366V434M1014 366V434M1270 366V434M1528 366V434" stroke="#00c000" />
    {[500, 757.5, 886, 1014, 1270, 1399, 1528].map((x) => <Tick key={x} x={x} y={387} />)}
    <Tick x={886} y={319} /><Tick x={1399} y={319} />
    <T x={615} y={229} s={32} w={53} t="30000" />
    <T x={617} y={298} s={32} w={43} t="6000" />
    <T x={1131} y={298} s={32} w={43} t="6000" />
    <T x={618} y={367} s={32} w={42} t="3000" />
    <T x={811} y={367} s={32} w={40} t="1500" />
    <T x={939} y={367} s={32} w={40} t="1500" />
    <T x={1131} y={367} s={32} w={42} t="3000" />
    <T x={1324} y={367} s={32} w={40} t="1500" />
    {/* elevation mark */}
    <T x={621} y={453} s={32} w={63} t="-0.200" />
    <path d="M550 472H688M550 472L575 497L601 472" stroke="#00b000" fill="none" />
    {/* thin verticals */}
    <path d="M500 473V707M731.500 473V707M758 473V707M1014 473V707M1271 473V707" stroke="#008a00" />
    <path d="M500 707V763M731.500 707V763M758 707V763M1014 707V763M1271 707V763" stroke="#b00000" />
    <path d="M1314 480V498M963 469H1014M1222 469H1270" stroke="#00a000" />
    <path d="M972 434V505M1270 434V505" stroke="#00b000" />
    <Tick x={972} y={469} /><Tick x={1014} y={469} /><Tick x={1271} y={469} />
    {[{ x: 506, t: "500", w: 28 }, { x: 731, t: "300", w: 29 }, { x: 758, t: "300", w: 29 }, { x: 1014, t: "1500", w: 38 }, { x: 1271, t: "1500", w: 38 }].map((h) => (
      <g key={h.x}><Hex x={h.x} y={461} /><T x={h.x} y={461} s={19} w={h.w} t={h.t} c="#f0f0f0" /></g>
    ))}
    <T x={984} y={448} s={30} w={32} t="500" />
    <T x={1284} y={448} s={30} w={32} t="500" />
    {/* row of room dimensions */}
    <T x={616} y={537} s={19} w={40} t="2700" c="#f0f0f0" />
    <T x={744} y={537} s={19} w={29} t="300" c="#f0f0f0" />
    <T x={886} y={537} s={19} w={40} t="3000" c="#f0f0f0" />
    <T x={1143} y={537} s={19} w={40} t="3000" c="#f0f0f0" />
    <T x={570} y={543} s={22} w={52} t="消防救援窗" c="#f0f0f0" />
    <path d="M595.500 572H660L628 609z" fill="#ff0000" stroke="#ffdddd" strokeWidth=".5" />
    <path d="M497 601H1637" stroke="#008a00" />
    <path d="M497 616H1637M497 701H1637" stroke="#b8b800" />
    <path d="M807 616H862M807 701H862" stroke="#00b000" />
    <path d="M828 612V705" stroke="#00c000" />
    <Tick x={828} y={616} /><Tick x={828} y={701} />
    <T x={807} y={669} s={30} w={40} t="1000" rot={-90} />
    <T x={578} y={648} s={26} w={16} t="上:" />
    <T x={629} y={648} s={30} w={34} t="C-6" />
    <T x={578} y={683} s={26} w={16} t="下:" />
    <T x={633} y={683} s={30} w={44} t="C-1a" />
    <path d="M497 664H517" stroke="#00a000" strokeWidth="1.500" />
    <path d="M497 751H521" stroke="#008a00" />
    {/* hatched opening */}
    {hatch.map((y, i) => {
      const d = ((y - 530) * 25) / 171;
      return <path key={y} d={`M${972 + d} ${y}H${1314 - d}`} stroke={i < 6 || i % 2 === 1 ? "#a0a000" : "#f0f000"} strokeWidth={i < 6 || i % 2 === 1 ? 1.5 : 1} />;
    })}
    <path d="M972 530L997 701M1314 530L1289 701M972 530V701M1314 530V701" stroke="#e8e800" fill="none" />
    {/* door leaves */}
    <path d="M1021 587C1085 587 1143 645 1143 712M1264 587C1200 587 1143 645 1143 712" stroke="#00d0d0" fill="none" />
    {/* walls */}
    <rect x="497" y="706" width="1140" height="18" fill={wallBand} />
    <rect x="501" y="707" width="257" height="16" fill="#ffff3a" stroke="#30f0f0" />
    <path d="M497 702H758M501 715H758" stroke="#30f0f0" />
    <rect x="761" y="710" width="250" height="10" fill="#ffff3a" />
    <rect x="760" y="710" width="18" height="10" fill="#8800ff" />
    <rect x="994" y="710" width="18" height="10" fill="#8800ff" />
    <rect x="1014" y="707" width="258" height="16" fill="#ffff3a" />
    <rect x="1274" y="710" width="101" height="10" fill="#ffff3a" />
    <rect x="1274" y="710" width="18" height="10" fill="#8800ff" />
    <rect x="1424" y="710" width="97" height="10" fill="#ffff3a" />
    <rect x="1539" y="710" width="98" height="10" fill="#ffff3a" />
    <path d="M1014 587V712M1021 587V712M1264 587V712M1271 587V712H1264M1014 587H1021M1264 587H1271M1014 712H1021" stroke="#00d8d8" fill="none" />
    <path d="M497 730H1637" stroke="#a00000" strokeWidth="1.500" />
    <path d="M1446 730H1489" stroke="#00a000" strokeWidth="1.500" />
    {/* magenta cloud */}
    <path d="M1416 1010Q1420 980 1436 962Q1386 920 1436 877Q1386 835 1436 791Q1412 775 1416 754M1424 706L1436 705Q1386 662 1436 619Q1386 565 1436 516Q1480 470 1523 518Q1566 470 1609 518Q1622 502 1637 499" stroke="#e000e0" fill="none" />
    <rect x="862" y="706" width="48" height="48" fill="#808080" />
    <rect x="1375" y="706" width="49" height="48" fill="#808080" />
    <rect x="1521" y="706" width="18" height="18" fill="#808080" />
    <path d="M886 645V706M1399 645V706M1399 754V1010" stroke="#c00000" />
    <path d="M886 754V1010" stroke="#d00000" />
    <path d="M1527.500 645V706" stroke="#a00000" />
    {/* vertical wall */}
    <rect x="1521" y="724" width="18" height="286" fill={wallBand} />
    <rect x="1525" y="724" width="10" height="286" fill="#ffff3a" />
    <rect x="1525" y="780" width="10" height="21" fill="#8800ff" />
    <path d="M1528 817V988" stroke="#ff8000" />
    <path d="M1525 730H1535" stroke="#ff8000" strokeWidth="1.500" />
    {/* right side dims */}
    <path d="M1368 530V701M1335 530H1388M1335 701H1388" stroke="#00a000" fill="none" />
    <Tick x={1368} y={530} /><Tick x={1368} y={701} />
    <T x={1464} y={537} s={22} w={40} t="4500" c="#f0f0f0" />
    <T x={1347} y={627} s={30} w={42} t="2000" rot={-90} />
    <T x={1447} y={926} s={30} w={52} t="4325" rot={-90} />
    <ellipse cx="1348" cy="681" rx="9" ry="9" stroke="#20d0d0" fill="none" />
    <path d="M1250 751H1333M1347 772V853M1467 730V1010" stroke="#00c000" />
    <Tick x={1467} y={730} />
    <circle cx="1353" cy="751" r="7" fill="#cfcfcf" />
    <path d="M1348 756L1358 746M1347 752L1354 745M1352 757L1359 750" stroke="#000" />
    <path d="M1637 749H1620V870M1620 749L1637 780" stroke="#b8b8b8" fill="none" />
    {/* lower right notes */}
    <T x={1103} y={748} s={26} w={16} t="上:" />
    <T x={1154} y={748} s={30} w={34} t="C-6" />
    <T x={1103} y={780} s={26} w={16} t="下:" />
    <T x={1155} y={780} s={30} w={34} t="M-1" c="#008080" />
    {/* bubbles along the bottom */}
    {[{ x: 517, y: 730, t: "3000", w: 38 }, { x: 1616, y: 730, t: "3000", w: 38 }, { x: 517, y: 987, t: "1000", w: 38 }, { x: 629, y: 998, t: "350", w: 29 }, { x: 731, y: 998, t: "300", w: 29 }, { x: 886, y: 998, t: "1-4", w: 24 }, { x: 1399, y: 998, t: "1-5", w: 24 }].map((h) => (
      <g key={h.t + h.x}><Hex x={h.x} y={h.y} /><T x={h.x} y={h.y} s={19} w={h.w} t={h.t} c="#f4f4f4" /></g>
    ))}
    {/* axes */}
    <path d="M548 960V940" stroke="#00ff00" strokeWidth="3" />
    <path d="M548 930l5 12h-10z" fill="#00ff00" />
    <path d="M548 960H566" stroke="#ff0000" strokeWidth="4" />
    <path d="M578 960l-12-6v12z" fill="#ff0000" />
    <circle cx="548" cy="960" r="5.500" fill="#0000c0" />
    <T x={548} y={923} s={15} w={9} t="Y" c="#00e000" />
    <T x={584} y={960} s={18} w={10} t="X" c="#ff0000" />
  </svg>
);

const ToolStrip = () => (
  <div className="absolute right-0 top-0 w-[34px] h-[228px] bg-[#a6a9ad] flex flex-col items-center gap-[3px] pt-[12px]">
    <svg width="24" height="24" viewBox="0 0 24 24"><circle cx="10" cy="14" r="9" fill="#dfe6ee" stroke="#667" /><circle cx="18" cy="6" r="5" fill="#c8d0da" stroke="#667" /></svg>
    <svg width="24" height="26" viewBox="0 0 24 26" className="mt-[2px]"><path d="M1 6L6 1h17v19l-5 5H1z" fill="#7f8fa8" stroke="#445" /><path d="M1 6h17v19M18 6l5-5" stroke="#445" fill="none" /></svg>
    <svg width="24" height="26" viewBox="0 0 24 26"><path d="M1 6L6 1h17v19l-5 5H1z" fill="#cfe3fa" stroke="#445" /><path d="M1 6h17v19M18 6l5-5M6 1v19h17M6 20l-5 5" stroke="#445" fill="none" /></svg>
    <Caret c="#444" />
    <svg width="24" height="26" viewBox="0 0 24 26" className="mt-[2px]"><path d="M1 6L6 1h17v19l-5 5H1z" fill="#8f9aa8" stroke="#445" /><path d="M1 6h17v19M18 6l5-5" stroke="#445" fill="none" /></svg>
    <Caret c="#444" />
    <svg width="24" height="24" viewBox="0 0 24 24" fill="none" className="mt-[2px]"><path d="M22 12a10 10 0 1 1-4-8M18 0v6h-6" stroke="#556" strokeWidth="2" /></svg>
    <Caret c="#444" />
    <span className="w-[24px] h-px bg-[#777] mt-[2px]" />
    <svg width="22" height="24" viewBox="0 0 22 24" fill="none" className="mt-[2px]"><rect x="1" y="1" width="20" height="22" rx="2" fill="#bcc2ca" stroke="#556" /><path d="M5 6h3M11 6h6M5 12h3M11 12h6M5 18h3M11 18h6" stroke="#445" /></svg>
  </div>
);

const DISPLAY: [number, string, string, string][] = [
  [0, "所有构件", "p", "e"], [1, "轴线", "c", "d"], [2, "轴网", "c", "d"], [2, "辅助轴线", "c", "d"],
  [1, "柱", "p", "e"], [2, "柱", "e", "e"], [2, "构造柱", "c", "e"], [2, "砌体柱", "c", "e"],
  [1, "墙", "p", "e"], [2, "剪力墙", "f", "e"], [2, "人防门框墙", "c", "e"], [2, "砌体墙", "c", "e"],
  [2, "砌体加筋", "e", "e"], [2, "保温墙", "c", "e"], [2, "暗梁", "e", "e"], [2, "墙垛", "e", "e"],
  [2, "幕墙", "c", "e"], [1, "门窗洞", "p", "e"], [2, "门", "c", "e"], [2, "窗", "c", "e"],
  [2, "门联窗", "c", "e"], [2, "墙洞", "c", "e"], [2, "带形窗", "c", "e"], [2, "带形洞", "c", "e"],
  [2, "飘窗", "e", "e"], [2, "老虎窗", "e", "e"], [2, "过梁", "c", "e"], [2, "壁龛", "e", "e"],
  [1, "梁", "p", "e"], [2, "梁", "e", "e"], [2, "连梁", "e", "e"], [2, "圈梁", "e", "e"], [1, "板", "e", "e"],
  [2, "现浇板", "e", "e"], [2, "螺旋板", "e", "e"], [2, "柱帽", "e", "e"],
];

const Mark = ({ k }: { k: string }) => {
  if (k === "c" || k === "f")
    return (
      <span className="w-[13px] h-[13px] rounded-[2px] bg-[#5ba6f4] flex items-center justify-center">
        <svg width="9" height="8" viewBox="0 0 9 8" fill="none"><path d="M1 4l2.500 2.500L8 1" stroke="#fff" strokeWidth="1.600" /></svg>
      </span>
    );
  if (k === "p")
    return (
      <span className="w-[13px] h-[13px] rounded-[3px] border border-[#777] bg-white flex items-center justify-center">
        <span className="w-[9px] h-[9px] rounded-[2px] bg-[#7fb8f6]" />
      </span>
    );
  if (k === "d") return <Box cls="bg-[#eeeeee] border-[#c8c8c8]" />;
  return <Box />;
};

const MinusBox = () => (
  <span className="w-[13px] h-[13px] rounded-[2px] border border-[#888] bg-white flex items-center justify-center shrink-0">
    <span className="w-[7px] h-px bg-[#333]" />
  </span>
);

const DisplayPanel = () => (
  <div className="w-[280px] shrink-0 flex flex-col bg-[#f0f0f0] text-[12px] border-l border-[#c4c4c4] overflow-hidden">
    <CloseBar />
    <div className="h-[22px] flex items-center pl-[8px] text-[#888] border-b border-[#d0d0d0] shrink-0">显示设置</div>
    <div className="flex items-end h-[30px] pl-[3px] gap-[4px] shrink-0">
      <div className="w-[75px] h-[26px] bg-white border border-b-0 border-[#d0d0d0] rounded-t-[3px] text-[#3b86e0] flex items-center justify-center">图元显示</div>
      <div className="w-[74px] h-[24px] bg-[#dcdcdc] rounded-t-[3px] text-[#666] flex items-center justify-center">楼层显示</div>
    </div>
    <div className="flex flex-1 overflow-hidden pl-[1px] pb-[38px]">
      <div className="w-[260px] flex flex-col bg-white border border-[#d0d0d0] overflow-hidden shrink-0">
        <div className="flex h-[22px] leading-[21px] text-center bg-[#efefef] border-b border-[#d0d0d0] text-[#444] shrink-0">
          <div className="w-[133px]">图层构件</div>
          <div className="w-[63px] bg-[#7fb8f6] text-white">显示图元</div>
          <div className="w-[63px] border-l border-[#d0d0d0]">显示名称</div>
        </div>
        {DISPLAY.map(([lv, t, a, b], i) => (
          <div key={i} className="flex h-[21px] border-b border-[#dadada] text-[#222] shrink-0">
            <div className="w-[133px] flex items-center whitespace-nowrap border-r border-[#dadada]">
              {lv === 0 && <span className="ml-[4px] mr-[6px] flex"><MinusBox /></span>}
              {lv === 1 && <span className="ml-[14px] mr-[6px] flex"><MinusBox /></span>}
              {lv === 2 && (
                <span className="ml-[21px] mr-[5px] w-[17px] h-full border-l border-[#dddddd] flex items-center">
                  <span className="w-full h-px bg-[#dddddd]" />
                </span>
              )}
              {t}
            </div>
            <div className={`w-[63px] flex items-center justify-center ${a === "f" ? "border-2 border-[#808080]" : ""}`}><Mark k={a} /></div>
            <div className="w-[63px] border-l border-[#dadada] flex items-center justify-center"><Mark k={b} /></div>
          </div>
        ))}
      </div>
      <div className="relative flex-1 ml-[5px]">
        <div className="w-[7px] ml-[1px] mt-[14px] h-[205px] rounded-full bg-[#c9c9c9]" />
        <div className="absolute left-[4px] top-0 w-[7px] h-[57px] rounded-full bg-[#5a5f64] flex flex-col justify-end gap-[1px] pb-[2px] px-[1px]">
          {[0, 1, 2, 3, 4, 5, 6, 7].map((i) => <span key={i} className="h-[2px] bg-[#5fd86a]" />)}
        </div>
      </div>
    </div>
  </div>
);

const StatusBtn = ({ w, children, on, dis }: { w: string; children: React.ReactNode; on?: boolean; dis?: boolean }) => (
  <div className={`h-[24px] flex items-center justify-center gap-[3px] ${w} ${on ? "bg-white border-2 border-[#3f96ea]" : "bg-[#d2d2d2] border-2 border-[#b4b4b4]"} ${dis ? "opacity-70" : ""}`}>{children}</div>
);

const StatusBar = () => (
  <div className="h-[28px] shrink-0 bg-[#dcdde0] flex items-center text-[12px] text-[#333] whitespace-nowrap">
    <span className="pl-[2px] w-[265px] tracking-[0.8px]">X = 36380 Y = 52628</span>
    <span className="w-[83px]">层高： 6.46</span>
    <span className="w-[133px]">标高： -1~5.46</span>
    <span className="w-[103px]">0</span>
    <span className="w-[103px]">隐藏 : 0</span>
    <div className="flex gap-[3px] items-center">
      <StatusBtn w="w-[25px]">
        <svg width="14" height="16" fill="none"><path d="M2 1v13h11M2 9h4v5" stroke="#444" /></svg>
      </StatusBtn>
      <StatusBtn w="w-[36px]" on>
        <svg width="15" height="20" fill="none"><rect x="1" y="4" width="12" height="15" stroke={B} /><rect x="0" y="1" width="5" height="5" fill="#f5a05a" stroke="#c87030" /></svg>
        <Caret />
      </StatusBtn>
      <div className="ml-[3px]">
        <StatusBtn w="w-[25px]" dis>
          <svg width="15" height="16" fill="none"><path d="M1 1l13 14M14 1L1 15" stroke="#888" /></svg>
        </StatusBtn>
      </div>
      <div className="ml-[3px]">
        <StatusBtn w="w-[36px]">
          <svg width="17" height="15" fill="none"><path d="M1 13h15M1 13L12 3M7 7l2 3" stroke="#333" /></svg>
          <Caret />
        </StatusBtn>
      </div>
      <StatusBtn w="w-[36px]">
        <svg width="17" height="15" fill="none"><path d="M1 4h6M4 1v6" stroke="#333" /><rect x="7" y="8" width="9" height="5" fill="#333" /></svg>
        <Caret />
      </StatusBtn>
      <StatusBtn w="w-[73px]">跨图层选择</StatusBtn>
      <StatusBtn w="w-[61px]">折线选择</StatusBtn>
    </div>
    <span className="ml-[6px]">按鼠标左键指定第一个角点，或拾取构件图元</span>
    <span className="ml-auto pr-[8px]">FPS</span>
  </div>
);

const Taskbar = () => (
  <div className="h-[10px] shrink-0 border-t-2 border-[#23384c] flex overflow-hidden bg-gradient-to-r from-[#1b6eac] via-[#2a86c8] to-[#14507f]">
    <span className="ml-[12px] w-[31px] h-[30px] rounded-full bg-[#9ec6df] border border-[#dbe9f2]" />
    <span className="ml-[71px] w-[165px] bg-[#f2f2f2]" />
    <span className="w-[55px] bg-[#1e78e0]" />
    <span className="ml-[16px] w-[13px] h-[13px] rounded-full bg-[#3aa0e0]" />
    <span className="ml-[2px] w-[12px] h-[12px] rounded-full bg-[#f0b020]" />
    <span className="ml-[54px] w-[59px] rounded-t-[3px] bg-[#cfe3f2] border border-[#e8f2f8]" />
    <span className="ml-[3px] w-[59px] rounded-t-[3px] bg-[#cfe3f2] border border-[#e8f2f8]" />
    <span className="ml-[3px] w-[59px] rounded-t-[3px] bg-[#e4eef5] border border-[#e8f2f8]" />
    <span className="ml-[3px] w-[58px] rounded-t-[3px] bg-[#e4eef5] border border-[#e8f2f8]" />
    <span className="ml-auto w-[14px] bg-[#8fa8bc] border border-[#dfe8ee]" />
  </div>
);

export default function App() {
  return (
    <div className="relative w-[1920px] h-[1048px] overflow-hidden flex flex-col bg-white text-[12px] font-['Noto_Sans_CJK_SC','Noto_Sans',sans-serif]">
      <TopBar />
      <Ribbon />
      <Selector />
      <div className="flex h-[845px] shrink-0">
        <NavPanel />
        <div className="w-[5px] shrink-0 bg-white" />
        <div className="w-[280px] shrink-0 flex flex-col gap-[4px]">
          <ComponentPanel />
          <PropsPanel />
        </div>
        <div className="w-[3px] shrink-0 bg-[#c8cbcf]" />
        <div className="relative w-[1140px] shrink-0 bg-black overflow-hidden">
          <CadDrawing />
          <ToolStrip />
        </div>
        <div className="w-[3px] shrink-0 bg-white" />
        <DisplayPanel />
      </div>
      <StatusBar />
      <Taskbar />

      {/* CPU temperature widget */}
      <div className="absolute left-[1773px] top-[138px] flex items-center">
        <div className="w-[60px] h-[60px] rounded-full bg-[#22272d] flex items-center justify-center z-10">
          <div className="w-[50px] h-[50px] rounded-full border-[2px] border-[#1e9be0] bg-[#3a3e44] flex items-center justify-center text-white">
            <span className="text-[26px] leading-none font-light font-['Roboto',sans-serif] tracking-[2px]">46</span>
            <span className="text-[11px] leading-none mt-[8px] font-bold">%</span>
          </div>
        </div>
        <div className="-ml-[20px] w-[77px] h-[42px] rounded-r-[12px] bg-[#22272d] pl-[26px] flex flex-col justify-center text-[12px] leading-[17px]">
          <span className="text-[#63d046] flex items-center gap-[4px]">40℃<svg width="9" height="13" viewBox="0 0 9 13"><path d="M5 0c4 4 5 9 0 13C1 11-2 7 5 0z" fill="#63d046" /></svg></span>
          <span className="text-[#cfcfcf] whitespace-nowrap -ml-[4px]">CPU温度</span>
        </div>
      </div>

      {/* G+ workbench notice */}
      <div className="absolute left-[1539px] top-[870px] w-[360px] h-[169px] bg-white border border-[#b4b4b4] flex flex-col text-[12px]">
        <div className="h-[30px] bg-[#4a9ce8] flex items-center pl-[10px] pr-[11px] text-white shrink-0">
          <span className="text-[21px] font-bold leading-none w-[26px]">G</span>
          <span className="text-[13px] font-bold tracking-[1px]">G+工作台</span>
          <svg width="14" height="14" viewBox="0 0 14 14" fill="none" className="ml-auto"><path d="M1 1l12 12M13 1L1 13" stroke="#fff" /></svg>
        </div>
        <div className="pl-[30px] pt-[17px] text-[#999] leading-[20px]">您所在的地区：<span className="text-[#444]">没有初始化</span></div>
        <div className="pl-[30px] pt-[12px] text-[#999] leading-[20px]">将为您提醒当地培训和软件更新信息</div>
        <div className="mt-[15px] border-t border-[#e4e4e4] pt-[10px] pr-[11px] flex justify-end">
          <div className="w-[121px] h-[32px] rounded-[3px] bg-[#6db52c] text-white text-[14px] flex items-center justify-center">更改地区</div>
        </div>
      </div>
    </div>
  );
}
